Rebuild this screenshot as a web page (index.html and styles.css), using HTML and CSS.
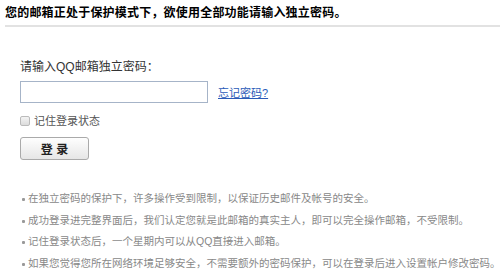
FILE: index.html
```html
<!DOCTYPE html>
<html lang="zh-CN">
  <head>
    <meta charset="UTF-8" />
    <title>独立密码</title>
    <link rel="stylesheet" href="styles.css">
  </head>
  <body>
    <div class="page">
      <h1 class="title">您的邮箱正处于保护模式下，欲使用全部功能请输入独立密码。</h1>

      <div class="login">
        <label class="label" for="pwd">请输入QQ邮箱独立密码：</label>
        <div class="pwd-row">
          <input type="password" id="pwd" class="pwd" />
          <a href="#" class="forget">忘记密码?</a>
        </div>
        <label class="remember">
          <span class="check"></span>
          记住登录状态
        </label>
        <button class="btn">登 录</button>
      </div>

      <!-- tips -->
      <ul class="tips">
        <li>在独立密码的保护下，许多操作受到限制，以保证历史邮件及帐号的安全。</li>
        <li>成功登录进完整界面后，我们认定您就是此邮箱的真实主人，即可以完全操作邮箱，不受限制。</li>
        <li>记住登录状态后，一个星期内可以从QQ直接进入邮箱。</li>
        <li>如果您觉得您所在网络环境足够安全，不需要额外的密码保护，可以在登录后进入设置帐户修改密码。</li>
      </ul>
    </div>
  </body>
</html>
```

FILE: styles.css
```css
body {
  margin: 0;
  font-family: "Liberation Sans", "Noto Sans CJK SC", sans-serif;
  color: #333;
  background: #fff;
}

.page {
  padding: 5px 0 0 5px;
}

.title {
  margin: 0;
  font-size: 12px;
  font-weight: bold;
  color: #000;
  line-height: 16px;
  letter-spacing: 0.2px;
  padding-bottom: 4px;
  border-bottom: 2px solid #e2e2e2;
}

.login {
  padding: 32px 0 0 15px;
}

.label {
  display: block;
  font-size: 12px;
  line-height: 16px;
  color: #333;
}

.pwd-row {
  display: flex;
  align-items: center;
  margin-top: 6px;
}

.pwd {
  box-sizing: border-box;
  width: 188px;
  height: 22px;
  margin: 0;
  border: 1px solid #a6b4c8;
  padding: 2px 4px;
}

.forget {
  margin-left: 10px;
  font-size: 11px;
  color: #2a5ab8;
}

.remember {
  display: flex;
  align-items: center;
  margin-top: 11px;
  font-size: 11px;
  line-height: 14px;
  color: #555;
}

.check {
  box-sizing: border-box;
  width: 10px;
  height: 10px;
  margin-right: 4px;
  border: 1px solid #bbb;
  border-radius: 2px;
  background: linear-gradient(#f4f4f4, #dcdcdc);
}

.btn {
  display: block;
  box-sizing: border-box;
  width: 69px;
  height: 23px;
  margin-top: 9px;
  padding: 0;
  border: 1px solid #aaa;
  border-radius: 3px;
  background: linear-gradient(#fefefe, #e6e6e6);
  font-family: "Liberation Sans", "Noto Sans CJK SC", sans-serif;
  font-size: 12px;
  font-weight: bold;
  color: #222;
}

.tips {
  margin: 28px 0 0 0;
  padding: 0 0 0 17px;
  list-style: none;
  font-size: 10.5px;
  line-height: 21.5px;
  color: #888;
}

.tips li {
  position: relative;
  padding-left: 6px;
  white-space: nowrap;
}

.tips li::before {
  content: "";
  position: absolute;
  left: 0;
  top: 10px;
  width: 3px;
  height: 3px;
  border-radius: 1px;
  background: #999;
}
```
